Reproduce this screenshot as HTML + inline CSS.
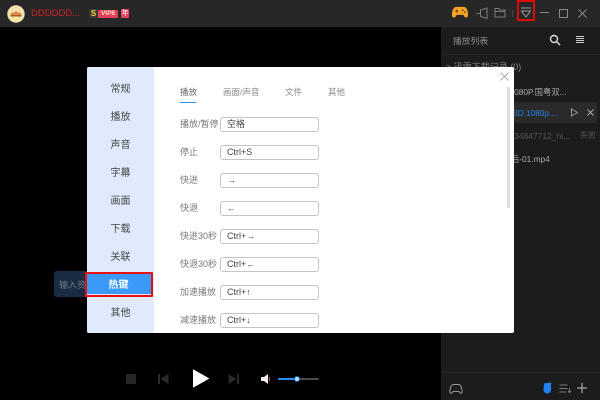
<!DOCTYPE html>
<html lang="zh">
<head>
<meta charset="utf-8">
<style>
html,body{margin:0;padding:0;background:#000}
#r{position:relative;width:600px;height:400px;overflow:hidden;background:#000;font-family:"Liberation Sans","Noto Sans CJK SC",sans-serif}
#r div,#r svg{position:absolute}
.t{white-space:nowrap;line-height:14px;height:14px}
.nav{left:87px;width:67px;text-align:center;font-size:10px;color:#444;line-height:14px}
.lb{left:180px;font-size:9px;color:#777;line-height:14px;white-space:nowrap}
.in{left:220px;width:97px;height:13px;border:1px solid #c4c4c4;border-radius:3px;background:#fff;font-size:9px;line-height:13px;color:#444;text-indent:6px;white-space:nowrap}
.tab{top:85px;font-size:8.5px;color:#888;line-height:14px;white-space:nowrap}
</style>
</head>
<body>
<div id="r">
<div style="left:0;top:0;width:600px;height:27px;background:#272727"></div>
<div style="left:441px;top:27px;width:159px;height:373px;background:#1c1c1c"></div>
<div style="left:441px;top:54px;width:159px;height:1px;background:#262626"></div>
<div style="left:441px;top:372px;width:159px;height:1px;background:#2b2b2b"></div>

<!-- avatar -->
<svg style="left:7px;top:5px" width="18" height="18" viewBox="0 0 18 18"><circle cx="9" cy="9" r="8.700" fill="#f6e3ad"/><path d="M3.500 10.500 L5 7 L7 8 L9 6 L11 8 L13 7 L14.500 10.500 Z" fill="#d08a3c"/><rect x="3.500" y="10" width="11" height="1.500" fill="#b35a28"/></svg>
<div class="t" style="left:31px;top:7px;font-size:9.500px;color:#d01f24">DDDDDD...</div>
<!-- badges -->
<div style="left:89px;top:9px;width:9px;height:9px;background:#3a3a3a;border-radius:2px"></div>
<div class="t" style="left:89px;top:9px;width:9px;height:9px;line-height:9px;font-size:8px;font-weight:bold;color:#f5d33b;text-align:center">S</div>
<div class="t" style="left:98px;top:10px;width:20px;height:8px;line-height:8px;background:#e6415c;border-radius:1px;font-size:6.500px;font-weight:bold;color:#ffe0c0;text-align:center">VIP8</div>
<div class="t" style="left:121px;top:9px;width:8px;height:9px;line-height:9px;background:#e6415c;border-radius:1px;font-size:7px;color:#fff;text-align:center">年</div>

<!-- top right icons -->
<svg style="left:451px;top:6px" width="18" height="13" viewBox="0 0 18 14"><path d="M5 1H13C15.500 1 17.500 4 17.700 9C17.800 12.500 15 13.500 13.500 11L12.500 9.500H5.500L4.500 11C3 13.500 .2 12.500 .3 9C.5 4 2.500 1 5 1Z" fill="#f5a226"/><path d="M4 5.500H7M5.500 4V7" stroke="#5a3200" stroke-width="1"/><circle cx="12" cy="4.500" r=".9" fill="#5a3200"/><circle cx="14" cy="6.500" r=".9" fill="#5a3200"/></svg>
<svg style="left:476px;top:7px" width="12" height="13" viewBox="0 0 12 13" fill="none" stroke="#7c7c7c"><path d="M.5 6.500H4.500M4.500 3L11 1V11.500L4.500 9.500Z"/></svg>
<svg style="left:494px;top:7px" width="12" height="11" viewBox="0 0 12 11" fill="none" stroke="#7a7a7a"><path d="M1 1.500H5L6 3H11V10H1Z"/><path d="M1 4.500H11"/></svg>
<div style="left:512px;top:10px;width:1px;height:7px;background:#444"></div>
<svg style="left:520px;top:7px" width="12" height="11" viewBox="0 0 12 11" fill="none" stroke="#9a9a9a"><path d="M1 1H11M1.500 4H10.500L6 10Z"/></svg>
<div style="left:517px;top:0;width:14px;height:17px;border:2px solid #e00a0a"></div>
<div style="left:540px;top:12px;width:9px;height:1px;background:#888"></div>
<div style="left:559px;top:9px;width:7px;height:7px;border:1px solid #888"></div>
<svg style="left:578px;top:9px" width="9" height="9" viewBox="0 0 9 9" stroke="#888" fill="none"><path d="M.5 .5L8.500 8.500M8.500 .5L.5 8.500"/></svg>

<!-- playlist header -->
<div class="t" style="left:453px;top:34px;font-size:8.800px;color:#8c8c8c">播放列表</div>
<svg style="left:549px;top:34px" width="12" height="12" viewBox="0 0 12 12" fill="none" stroke="#ddd" stroke-width="1.400"><circle cx="5" cy="5" r="3.500"/><path d="M7.500 7.500L11 11"/></svg>
<div style="left:576px;top:36px;width:8px;height:1px;background:#ccc;box-shadow:0 2px 0 #ccc,0 4px 0 #ccc,0 6px 0 #ccc"></div>

<!-- playlist items -->
<div class="t" style="left:446px;top:60px;font-size:9px;color:#888">&gt; 迅雷下载记录 (0)</div>
<div class="t" style="left:509.500px;top:85px;font-size:8.300px;color:#aaa">1080P.国粤双...</div>
<div style="left:441px;top:102px;width:156px;height:21px;background:#2a2a2a"></div>
<div class="t" style="left:513px;top:106px;font-size:8.300px;color:#2a80e8">3D.1080p....</div>
<svg style="left:571px;top:108px" width="7" height="9" viewBox="0 0 7 9" fill="none" stroke="#999"><path d="M.5 1L6.500 4.500L.5 8Z"/></svg>
<svg style="left:587px;top:109px" width="7" height="7" viewBox="0 0 7 7" stroke="#aaa" fill="none"><path d="M.5 .5L6.500 6.500M6.500 .5L.5 6.500"/></svg>
<div class="t" style="left:514px;top:129px;font-size:8.500px;color:#555">34847712_hi...</div>
<div class="t" style="left:580px;top:129px;font-size:8px;color:#555">失败</div>
<div class="t" style="left:511px;top:152px;font-size:8.300px;color:#aaa">后-01.mp4</div>

<!-- bottom right icons -->
<svg style="left:449px;top:383px" width="14" height="12" viewBox="0 0 14 12" fill="none" stroke="#999"><path d="M4 1.500H10C12 1.500 13.500 7 13 9.500C12.500 11 11 10.500 10 8.500H4C3 10.500 1.500 11 1 9.500C.5 7 2 1.500 4 1.500Z"/></svg>
<svg style="left:543px;top:382px" width="9" height="12" viewBox="0 0 9 12"><path d="M1 1.500L8 .5V8C8 10 6 11.500 4.500 11.500C2.500 11.500 .5 10 .5 8Z" fill="#1e82f0"/></svg>
<svg style="left:559px;top:384px" width="13" height="10" viewBox="0 0 13 10" fill="none" stroke="#777"><path d="M.5 1H8.500M.5 4.500H8.500M.5 8H7M10.500 4V8.500M9 7L10.500 8.500L12 7"/></svg>
<svg style="left:577px;top:383px" width="10" height="10" viewBox="0 0 10 10" stroke="#aaa" stroke-width="1.200"><path d="M5 0V10M0 5H10"/></svg>

<!-- input tooltip -->
<div style="left:54px;top:271px;width:40px;height:26px;background:#1a2c44;border-radius:3px"></div>
<div class="t" style="left:59px;top:278px;font-size:9px;color:#707a85">输入资</div>

<!-- player controls -->
<div style="left:126px;top:374px;width:10px;height:10px;background:#262626"></div>
<svg style="left:158px;top:374px" width="11" height="10" viewBox="0 0 11 10" fill="#2a2a2a"><rect width="2" height="10"/><path d="M10.500 0V10L2.500 5Z"/></svg>
<svg style="left:192px;top:369px" width="17" height="19" viewBox="0 0 17 19"><path d="M1.500 1V18L16.500 9.500Z" fill="#fff" stroke="#fff" stroke-linejoin="round"/></svg>
<svg style="left:228px;top:374px" width="11" height="10" viewBox="0 0 11 10" fill="#2a2a2a"><rect x="9" width="2" height="10"/><path d="M.5 0V10L8.500 5Z"/></svg>
<svg style="left:261px;top:373px" width="10" height="12" viewBox="0 0 10 12"><path d="M0 4H3L7 1V11L3 8H0Z" fill="#eee"/><path d="M8.500 4V8" stroke="#a55"/></svg>
<div style="left:278px;top:378px;width:41px;height:2px;background:#4a4a4a;border-radius:1px"></div>
<div style="left:278px;top:378px;width:19px;height:2px;background:#2a8ff0;border-radius:1px"></div>
<div style="left:294px;top:376px;width:4px;height:4px;background:#bfe0ff;border:1px solid #1463b8;border-radius:50%"></div>

<!-- dialog -->
<div style="left:87px;top:67px;width:427px;height:266px;background:#fff;border-radius:2px"></div>
<div style="left:87px;top:67px;width:67px;height:266px;background:#dfeafc;border-radius:2px 0 0 2px"></div>
<div class="nav" style="top:83px">常规</div>
<div class="nav" style="top:111px">播放</div>
<div class="nav" style="top:139px">声音</div>
<div class="nav" style="top:167px">字幕</div>
<div class="nav" style="top:195px">画面</div>
<div class="nav" style="top:223px">下载</div>
<div class="nav" style="top:251px">关联</div>
<div style="left:86px;top:273px;width:66px;height:21px;background:#3b99f8"></div>
<div class="nav" style="top:279px;left:85px;color:#fff;font-weight:bold">热键</div>
<div style="left:85px;top:272px;width:64px;height:21px;border:2px solid #e8100c;border-radius:1px"></div>
<div class="nav" style="top:307px">其他</div>

<div class="tab" style="left:180px;color:#666">播放</div>
<div style="left:180px;top:102px;width:16px;height:1px;background:#2a8ff0"></div>
<div class="tab" style="left:223px">画面/声音</div>
<div class="tab" style="left:285px">文件</div>
<div class="tab" style="left:328px">其他</div>

<svg style="left:500px;top:72px" width="9" height="9" viewBox="0 0 9 9" stroke="#aaa" fill="none"><path d="M.5 .5L8.500 8.500M8.500 .5L.5 8.500"/></svg>
<div style="left:507px;top:87px;width:3px;height:121px;background:#e0e0e0"></div>

<div class="lb" style="top:117px">播放/暂停</div><div class="in" style="top:117px">空格</div>
<div class="lb" style="top:145px">停止</div><div class="in" style="top:145px">Ctrl+S</div>
<div class="lb" style="top:173px">快进</div><div class="in" style="top:173px">→</div>
<div class="lb" style="top:201px">快退</div><div class="in" style="top:201px">←</div>
<div class="lb" style="top:229px">快进30秒</div><div class="in" style="top:229px">Ctrl+→</div>
<div class="lb" style="top:257px">快退30秒</div><div class="in" style="top:257px">Ctrl+←</div>
<div class="lb" style="top:285px">加速播放</div><div class="in" style="top:285px">Ctrl+↑</div>
<div class="lb" style="top:313px">减速播放</div><div class="in" style="top:313px">Ctrl+↓</div>
</div>
</body>
</html>
